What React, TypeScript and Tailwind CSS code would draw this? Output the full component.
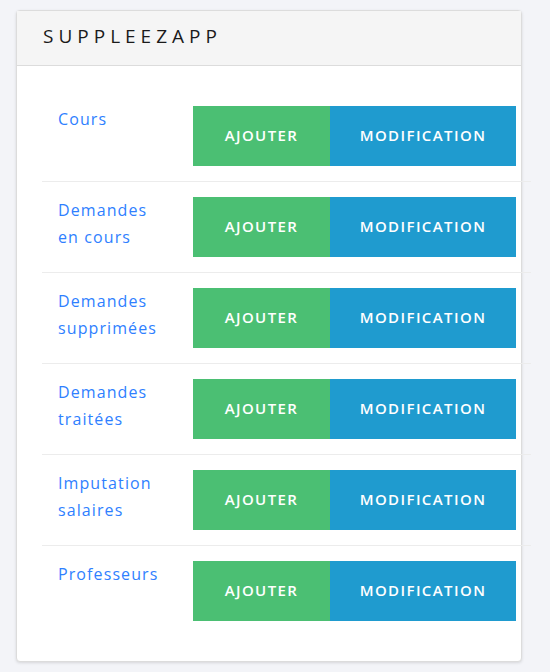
const rows: string[][] = [
  ["Cours"],
  ["Demandes", "en cours"],
  ["Demandes", "supprimées"],
  ["Demandes", "traitées"],
  ["Imputation", "salaires"],
  ["Professeurs"],
];

export default function App() {
  return (
    <div
      className="min-h-[672px] bg-[#f3f4f8] pt-[10px] pl-4"
      style={{ fontFamily: '"Open Sans", "Noto Sans", sans-serif' }}
    >
      <div className="w-[506px] rounded-[4px] border border-[#dcdcdc] bg-white shadow-[0_1px_3px_rgba(0,0,0,0.12)]">
        <div className="h-[55px] border-b border-[#dcdcdc] bg-[#f5f5f5] pl-[26px] pt-[12px]">
          <h1 className="text-[19px] font-normal leading-[26px] tracking-[5px] text-[#1a1a1a]">
            SUPPLEEZAPP
          </h1>
        </div>
        <div className="px-[25px] py-[25px]">
          <div className="w-[489px]">
            {rows.map((lines, i) => (
              <div
                key={i}
                className={
                  "flex items-start py-[15px] pl-4 pr-[15px] " +
                  (i < rows.length - 1 ? "border-b border-[#ececec]" : "")
                }
              >
                <a
                  href="#"
                  className="w-[135px] text-[16px] leading-[27px] tracking-[1.1px] text-[#2f7fff]"
                >
                  {lines.map((l, j) => (
                    <div key={j}>{l}</div>
                  ))}
                </a>
                <div className="flex">
                  <a
                    href="#"
                    className="flex h-[60px] w-[137px] items-center justify-center pb-[2px] bg-[#4bbf73] text-[15px] font-semibold tracking-[1.4px] text-white"
                  >
                    AJOUTER
                  </a>
                  <a
                    href="#"
                    className="flex h-[60px] w-[186px] items-center justify-center pb-[2px] bg-[#1f9bcf] text-[15px] font-semibold tracking-[1.4px] text-white"
                  >
                    MODIFICATION
                  </a>
                </div>
              </div>
            ))}
          </div>
        </div>
      </div>
    </div>
  );
}
